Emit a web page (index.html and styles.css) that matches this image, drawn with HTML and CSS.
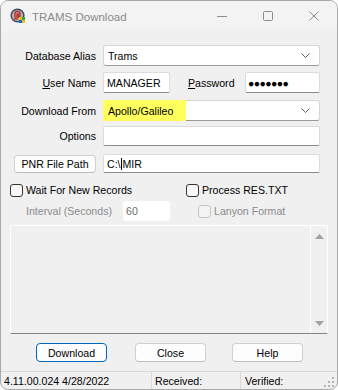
FILE: index.html
```html
<!DOCTYPE html>
<html>
<head>
<meta charset="utf-8">
<link rel="stylesheet" href="styles.css">
</head>
<body>
<div class="window">
  <div class="titlebar">
    <svg class="app-icon" width="16" height="16" viewBox="0 0 16 16">
      <circle cx="7.5" cy="7.5" r="7" fill="#3a4a6a"/>
      <circle cx="7.5" cy="7.5" r="5.6" fill="#b9b2b0"/>
      <path d="M5 12 V5.5 Q5 3.5 7.5 3.5 Q10 3.5 10 5.5 V10 M7 12 V6.5 Q7 5.6 7.8 5.6 Q8.5 5.6 8.5 6.5 V10" fill="none" stroke="#c0302a" stroke-width="1.4"/>
      <rect x="9" y="9" width="3" height="3" fill="#e8c020"/>
      <rect x="12" y="9" width="3" height="3" fill="#30a040"/>
      <rect x="9" y="12" width="3" height="3" fill="#2060c0"/>
      <rect x="12" y="12" width="3" height="3" fill="#e8c020"/>
    </svg>
    <span class="title">TRAMS Download</span>
    <div class="caption">
      <span class="cap"><svg width="10" height="10" viewBox="0 0 10 10"><path d="M0 5.5 H10" stroke="#8d8d8d" stroke-width="1"/></svg></span>
      <span class="cap"><svg width="10" height="10" viewBox="0 0 10 10"><rect x="0.5" y="0.5" width="9" height="9" rx="1" fill="none" stroke="#8d8d8d" stroke-width="1"/></svg></span>
      <span class="cap"><svg width="10" height="10" viewBox="0 0 10 10"><path d="M0.5 0.5 L9.5 9.5 M9.5 0.5 L0.5 9.5" stroke="#8d8d8d" stroke-width="1"/></svg></span>
    </div>
  </div>

  <div class="client">
    <div class="row r1">
      <span class="lbl">Database Alias</span>
      <div class="combo"><span class="ctext">Trams</span><svg class="chev" width="9" height="5" viewBox="0 0 9 5"><path d="M0.5 0.5 L4.5 4.5 L8.5 0.5" fill="none" stroke="#5f5f5f" stroke-width="1"/></svg></div>
    </div>

    <div class="row r2">
      <span class="lbl"><u>U</u>ser Name</span>
      <div class="pair">
        <div class="edit user">MANAGER</div>
        <span class="plbl"><u>P</u>assword</span>
        <div class="edit pass">●●●●●●●</div>
      </div>
    </div>

    <div class="row r3">
      <span class="lbl">Download From</span>
      <div class="combo"><span class="ctext hl">Apollo/Galileo</span><svg class="chev" width="9" height="5" viewBox="0 0 9 5"><path d="M0.5 0.5 L4.5 4.5 L8.5 0.5" fill="none" stroke="#5f5f5f" stroke-width="1"/></svg></div>
    </div>

    <div class="row r4">
      <span class="lbl">Options</span>
      <div class="edit"></div>
    </div>

    <div class="row r5">
      <button class="btn pnr">PNR File Path</button>
      <div class="edit path">C:\<span class="caret"></span>MIR</div>
    </div>

    <div class="row r6">
      <label class="chk wait"><span class="box"></span>Wait For New Records</label>
      <label class="chk"><span class="box"></span>Process RES.TXT</label>
    </div>

    <div class="row r7">
      <span class="ilbl">Interval (Seconds)</span>
      <div class="edit ival">60</div>
      <label class="chk dis lanyon"><span class="box"></span>Lanyon Format</label>
    </div>

    <div class="memo">
      <div class="memo-body"></div>
      <div class="vscroll">
        <svg width="9" height="5" viewBox="0 0 9 5"><path d="M0 5 L4.5 0 L9 5 Z" fill="#a3a3a3"/></svg>
        <svg width="9" height="5" viewBox="0 0 9 5"><path d="M0 0 L4.5 5 L9 0 Z" fill="#a3a3a3"/></svg>
      </div>
    </div>

    <div class="buttons">
      <button class="btn act default">Download</button>
      <button class="btn act">Close</button>
      <button class="btn act">Help</button>
    </div>
  </div>

  <div class="statusbar">
    <span class="panel p1">4.11.00.024 4/28/2022</span>
    <span class="panel p2">Received:</span>
    <span class="panel p3">Verified:</span>
    <svg class="grip" width="12" height="12" viewBox="0 0 12 12">
      <rect x="9" y="1" width="2" height="2" fill="#b4b4b4"/>
      <rect x="5" y="5" width="2" height="2" fill="#b4b4b4"/>
      <rect x="9" y="5" width="2" height="2" fill="#b4b4b4"/>
      <rect x="1" y="9" width="2" height="2" fill="#b4b4b4"/>
      <rect x="5" y="9" width="2" height="2" fill="#b4b4b4"/>
      <rect x="9" y="9" width="2" height="2" fill="#b4b4b4"/>
    </svg>
  </div>
</div>
</body>
</html>
```

FILE: styles.css
```css
* { box-sizing: border-box; }
html, body { margin: 0; padding: 0; background: #ffffff; }
body {
  font-family: "Liberation Sans", Arial, sans-serif;
  font-size: 10.6px;
  color: #000;
}
.window {
  width: 338px;
  height: 390px;
  border: 1px solid #a9a9a9;
  border-radius: 8px;
  background: #f0f0f0;
  overflow: hidden;
  display: flex;
  flex-direction: column;
  position: relative;
}
.titlebar {
  height: 30px;
  flex: none;
  background: #f3f3f3;
  display: flex;
  align-items: center;
  padding-left: 9px;
}
.app-icon { flex: none; }
.title {
  margin-left: 6px;
  font-size: 11.5px;
  color: #8a8a8a;
  margin-top: 1px;
}
.caption {
  margin-left: auto;
  display: flex;
  align-items: center;
  margin-right: 18px;
}
.cap { display: flex; margin-left: 36px; }
.cap:first-child { margin-left: 0; }

.client {
  flex: 1;
  display: flex;
  flex-direction: column;
}
.row {
  display: flex;
  align-items: center;
  flex: none;
}
.lbl {
  width: 95px;
  text-align: right;
  flex: none;
  margin-right: 7px;
}
.r1 { margin-top: 14px; height: 21px; }
.r2 { margin-top: 6px; height: 21px; }
.r3 { margin-top: 7px; height: 21px; }
.r4 { margin-top: 5px; height: 20px; }
.r5 { margin-top: 8px; height: 19px; padding-left: 13px; }
.r6 { margin-top: 10px; height: 14px; padding-left: 9px; }
.r7 { margin-top: 4px; height: 20px; padding-left: 25px; }

.combo {
  width: 217px;
  height: 21px;
  background: #fff;
  border: 1px solid #d6d6d6;
  border-bottom-color: #9a9a9a;
  border-radius: 3px;
  display: flex;
  align-items: center;
  padding-right: 9px;
}
.ctext { padding-left: 4px; flex: none; }
.hl {
  background: #ffff5e;
  align-self: stretch;
  display: flex;
  align-items: center;
  width: 83px;
  margin: -1px 0 -1px -1px;
  padding-left: 5px;
}
.chev { margin-left: auto; }

.edit {
  width: 217px;
  height: 100%;
  background: #fff;
  border: 1px solid #dcdcdc;
  border-bottom-color: #8a8a8a;
  border-radius: 2px;
  display: flex;
  align-items: center;
  padding-left: 3px;
  flex: none;
}
.pair { display: flex; align-items: center; height: 100%; }
.edit.user { width: 67px; }
.plbl { margin-left: 18px; width: 57px; flex: none; }
.edit.pass { width: 75px; font-size: 10.5px; letter-spacing: -0.6px; padding-left: 2px; }
.r5 .edit { margin-left: 7px; }
.caret { display: inline-block; width: 1px; height: 12px; background: #000; margin: 0 1px 0 0; }

.btn {
  font-family: inherit;
  font-size: inherit;
  color: #000;
  background: #fdfdfd;
  border: 1px solid #d0d0d0;
  border-bottom-color: #bcbcbc;
  border-radius: 4px;
  padding: 0;
  height: 100%;
  flex: none;
}
.pnr { width: 82px; height: 18px; }

.chk { display: flex; align-items: center; flex: none; }
.box {
  width: 13px;
  height: 13px;
  border: 1px solid #333;
  border-radius: 3px;
  background: #f8f8f8;
  margin-right: 3px;
  flex: none;
}
.wait { width: 176px; }
.ilbl { color: #8a8a8a; width: 97px; flex: none; }
.ival { width: 47px; border-color: #fff; color: #6d6d6d; padding-left: 2px; }
.dis { color: #8a8a8a; }
.dis .box { border-color: #c6c6c6; background: #f3f3f3; }
.lanyon { margin-left: 28px; }

.memo {
  margin: 4px 9px 0 9px;
  height: 109px;
  flex: none;
  border: 1px solid #ffffff;
  border-bottom-color: #858585;
  display: flex;
  background: #f0f0f0;
}
.memo-body { flex: 1; }
.vscroll {
  width: 17px;
  border-left: 1px solid #ffffff;
  display: flex;
  flex-direction: column;
  justify-content: space-between;
  align-items: center;
  padding: 8px 0 7px 0;
}

.buttons {
  margin-top: 9px;
  height: 19px;
  display: flex;
  padding-left: 35px;
  flex: none;
}
.act { width: 71px; }
.act + .act { margin-left: 28px; }
.act:last-child { margin-left: 26px; }
.default { border: 1px solid #0067c0; }

.statusbar {
  height: 18px;
  flex: none;
  border-top: 1px solid #dadada;
  display: flex;
  align-items: center;
  position: relative;
}
.panel { height: 100%; display: flex; align-items: center; flex: none; }
.p1 { width: 151px; padding-left: 3px; border-right: 1px solid #dadada; }
.p2 { width: 89px; padding-left: 3px; border-right: 1px solid #dadada; }
.p3 { padding-left: 4px; }
.grip { position: absolute; right: 2px; bottom: 1px; }
```
